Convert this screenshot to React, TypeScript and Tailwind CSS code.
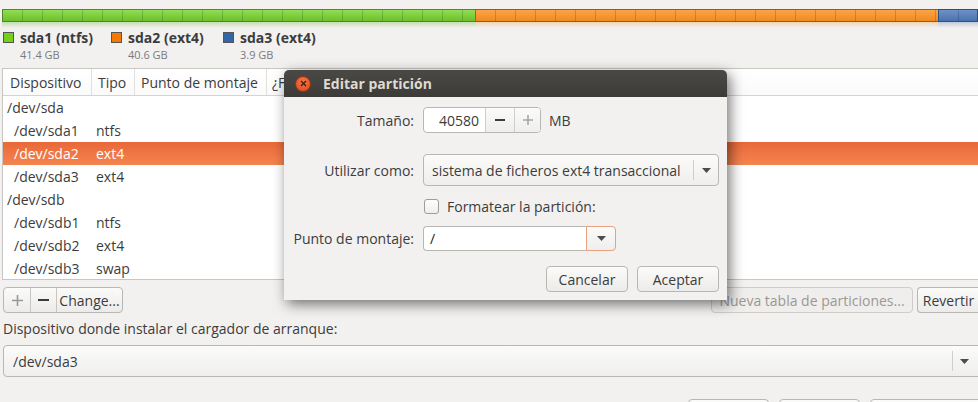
import React from "react";

const FONT = "font-['Open_Sans','Noto_Sans',sans-serif]";

type Row = { dev: string; tipo?: string; disk?: boolean; sel?: boolean };

const ROWS: Row[] = [
  { dev: "/dev/sda", disk: true },
  { dev: "/dev/sda1", tipo: "ntfs" },
  { dev: "/dev/sda2", tipo: "ext4", sel: true },
  { dev: "/dev/sda3", tipo: "ext4" },
  { dev: "/dev/sdb", disk: true },
  { dev: "/dev/sdb1", tipo: "ntfs" },
  { dev: "/dev/sdb2", tipo: "ext4" },
  { dev: "/dev/sdb3", tipo: "swap" },
];

function Arrow({ className = "" }: { className?: string }) {
  return (
    <svg width="9" height="5" viewBox="0 0 9 5" className={className}>
      <path d="M0 0h9L4.5 5z" fill="#4c4c4c" />
    </svg>
  );
}

function DiskBar() {
  return (
    <div className="pt-[9px] pl-[2px]">
      <div className="flex h-[13px]">
        <div className="w-[474px] border border-[#4d8a22] bg-[repeating-linear-gradient(90deg,transparent_0_19px,rgba(0,0,0,0.16)_19px_20px),linear-gradient(#92de52,#6cbf2c)]" />
        <div className="w-[462px] border-y border-[#9a5a14] bg-[repeating-linear-gradient(90deg,transparent_0_19px,rgba(0,0,0,0.16)_19px_20px),linear-gradient(#fca445,#ef8a21)]" />
        <div className="flex-1 border border-[#2d4f80] bg-[repeating-linear-gradient(90deg,transparent_0_19px,rgba(0,0,0,0.16)_19px_20px),linear-gradient(#6c92c8,#4a72ad)]" />
      </div>
      <div className="flex h-[6px]">
        <div className="w-[474px] bg-[linear-gradient(rgba(110,180,50,0.35),transparent)]" />
        <div className="w-[462px] bg-[linear-gradient(rgba(240,140,40,0.3),transparent)]" />
        <div className="flex-1 bg-[linear-gradient(rgba(80,110,170,0.3),transparent)]" />
      </div>
    </div>
  );
}

function LegendItem({ name, size, color, w }: { name: string; size: string; color: string; w: string }) {
  return (
    <div className={`flex shrink-0 ${w}`}>
      <div className={`mt-[4px] w-[11px] h-[11px] shrink-0 border border-[#555] ${color}`} />
      <div className="ml-[6px] flex flex-col">
        <span className="text-[14px] leading-[19px] font-bold text-[#3c3c3c] whitespace-nowrap">{name}</span>
        <span className="text-[11px] leading-[15px] text-[#7a7a7a]">{size}</span>
      </div>
    </div>
  );
}

function Legend() {
  return (
    <div className="flex pl-[3px]">
      <LegendItem name="sda1 (ntfs)" size="41.4 GB" color="bg-[#73d216]" w="w-[108px]" />
      <LegendItem name="sda2 (ext4)" size="40.6 GB" color="bg-[#f57900]" w="w-[112px]" />
      <LegendItem name="sda3 (ext4)" size="3.9 GB" color="bg-[#3465a4]" w="w-[120px]" />
    </div>
  );
}

function Table() {
  return (
    <div className="ml-[2px] h-[212px] w-[980px] bg-white border border-[#c8c6c3] overflow-hidden">
      <div className="flex h-[27px] items-center border-b border-[#d6d4d1] text-[14px] text-[#3c3c3c] bg-[linear-gradient(#ffffff,#fafafa)]">
        <div className="w-[89px] h-full flex items-center pl-[7px] border-r border-[#e2e0dd]">Dispositivo</div>
        <div className="w-[43px] h-full flex items-center pl-[6px] border-r border-[#e2e0dd]">Tipo</div>
        <div className="w-[132px] h-full flex items-center pl-[6px] border-r border-[#e2e0dd]">Punto de montaje</div>
        <div className="w-[17px] h-full flex items-center pl-[5px] overflow-hidden whitespace-nowrap">¿F</div>
      </div>
      {ROWS.map((r) => (
        <div
          key={r.dev}
          className={`flex h-[23px] items-center text-[14px] ${
            r.sel ? "text-white bg-[linear-gradient(#e8683a,#f5844f)]" : "text-[#3c3c3c]"
          }`}
        >
          <div className={`w-[89px] ${r.disk ? "pl-[4px]" : "pl-[11px]"}`}>{r.dev}</div>
          <div className="pl-[4px]">{r.tipo}</div>
        </div>
      ))}
    </div>
  );
}

function Btn({ children, className = "" }: { children?: React.ReactNode; className?: string }) {
  return (
    <div
      className={`h-[26px] shrink-0 flex items-center justify-center rounded-[4px] border border-[#b9b7b4] bg-[linear-gradient(#fbfbfa,#ecebe9)] text-[14px] text-[#3c3c3c] ${className}`}
    >
      {children}
    </div>
  );
}

function Dialog() {
  return (
    <div className="absolute left-[284px] top-[70px] w-[443px] h-[230px] rounded-t-[5px] bg-[#f2f1f0] shadow-[3px_4px_14px_rgba(0,0,0,0.55)] overflow-hidden">
      <div className="h-[27px] flex items-center bg-[linear-gradient(#4a4945,#3c3b37)]">
        <div className="ml-[11px] w-[16px] h-[16px] rounded-full bg-[radial-gradient(circle_at_50%_35%,#f5774a,#d64a1e)] border border-[#9c3514] flex items-center justify-center">
          <svg width="7" height="7" viewBox="0 0 7 7">
            <path d="M1 1l5 5M6 1l-5 5" stroke="#4a1a08" strokeWidth="1.3" />
          </svg>
        </div>
        <span className="ml-[12px] text-[14px] font-bold text-[#dfdbd2]">Editar partición</span>
      </div>

      <div className="flex flex-col pt-[10px]">
        <div className="flex items-center h-[26px]">
          <div className="w-[130px] text-right text-[14px] text-[#3c3c3c]">Tamaño:</div>
          <div className="ml-[9px] w-[118px] h-[26px] flex rounded-[4px] border border-[#b9b7b4] bg-white overflow-hidden">
            <div className="w-[61px] flex items-center justify-end pr-[6px] text-[14px] text-[#3c3c3c]">40580</div>
            <div className="w-[29px] flex items-center justify-center border-l border-[#d0cecb] bg-[linear-gradient(#fbfbfa,#efeeec)]">
              <div className="w-[10px] h-[2px] bg-[#3c3c3c]" />
            </div>
            <div className="flex-1 flex items-center justify-center border-l border-[#d0cecb] bg-[linear-gradient(#fbfbfa,#efeeec)]">
              <svg width="10" height="10" viewBox="0 0 10 10">
                <path d="M5 0v10M0 5h10" stroke="#a8a6a3" strokeWidth="1.6" />
              </svg>
            </div>
          </div>
          <div className="ml-[8px] text-[14px] text-[#3c3c3c]">MB</div>
        </div>

        <div className="flex items-center mt-[21px] h-[32px]">
          <div className="w-[130px] text-right text-[14px] text-[#3c3c3c]">Utilizar como:</div>
          <div className="ml-[9px] w-[296px] h-[32px] flex items-center rounded-[4px] border border-[#b9b7b4] bg-[linear-gradient(#fbfbfa,#efeeec)]">
            <div className="flex-1 pl-[8px] text-[14px] text-[#3c3c3c] whitespace-nowrap">sistema de ficheros ext4 transaccional</div>
            <div className="w-[25px] h-[20px] flex items-center justify-center border-l border-[#d0cecb]">
              <Arrow />
            </div>
          </div>
        </div>

        <div className="flex items-center mt-[12px] h-[16px]">
          <div className="ml-[140px] w-[15px] h-[15px] rounded-[3px] border border-[#9e9c99] bg-[linear-gradient(#fdfdfd,#efeeec)]" />
          <div className="ml-[8px] text-[14px] text-[#3c3c3c]">Formatear la partición:</div>
        </div>

        <div className="flex items-center mt-[12px] h-[25px]">
          <div className="w-[130px] text-right text-[14px] text-[#3c3c3c]">Punto de montaje:</div>
          <div className="ml-[9px] w-[193px] h-[25px] flex">
            <div className="flex-1 flex items-center pl-[6px] rounded-l-[4px] border border-r-0 border-[#b9b7b4] bg-white text-[14px] text-[#222]">/</div>
            <div className="w-[30px] flex items-center justify-center rounded-r-[4px] border border-[#e9a080] bg-[linear-gradient(#fbfbfa,#efeeec)]">
              <Arrow />
            </div>
          </div>
        </div>

        <div className="flex justify-end gap-[9px] mt-[15px] pr-[8px]">
          <Btn className="w-[82px]">Cancelar</Btn>
          <Btn className="w-[82px]">Aceptar</Btn>
        </div>
      </div>
    </div>
  );
}

export default function App() {
  return (
    <div className={`relative w-[978px] h-[402px] overflow-hidden bg-[#f2f1f0] ${FONT}`}>
      <DiskBar />
      <Legend />
      <div className="mt-[6px]">
        <Table />
      </div>

      <div className="flex items-center mt-[7px] pl-[3px]">
        <div className="flex h-[26px] rounded-[4px] border border-[#b9b7b4] bg-[linear-gradient(#fbfbfa,#ecebe9)] overflow-hidden">
          <div className="w-[26px] flex items-center justify-center">
            <svg width="11" height="11" viewBox="0 0 11 11">
              <path d="M5.5 0v11M0 5.5h11" stroke="#9a9895" strokeWidth="1.6" />
            </svg>
          </div>
          <div className="w-[26px] flex items-center justify-center border-l border-[#c8c6c3]">
            <div className="w-[11px] h-[2px] bg-[#3c3c3c]" />
          </div>
          <div className="w-[66px] flex items-center justify-center border-l border-[#c8c6c3] text-[14px] text-[#3c3c3c]">Change...</div>
        </div>
        <div className="flex-1" />
        <Btn className="w-[202px] text-[#9a9895] border-[#cfcdca] bg-none bg-[#efeeec]">Nueva tabla de particiones...</Btn>
        <Btn className="ml-[4px] mr-[-1px] w-[62px] rounded-r-none border-r-0">Revertir</Btn>
      </div>

      <div className="mt-[6px] pl-[3px] text-[14px] leading-[20px] text-[#3c3c3c]">
        Dispositivo donde instalar el cargador de arranque:
      </div>

      <div className="mt-[6px] ml-[3px] w-[980px] h-[32px] flex items-center rounded-[4px] border border-[#b9b7b4] bg-[linear-gradient(#fbfbfa,#efeeec)]">
        <div className="flex-1 pl-[9px] text-[14px] text-[#3c3c3c]">/dev/sda3</div>
        <div className="w-[27px] h-[20px] mr-[3px] flex items-center justify-start pl-[7px] border-l border-[#d0cecb]">
          <Arrow />
        </div>
      </div>

      <div className="flex mt-[22px] ml-[688px] gap-[10px]">
        <Btn className="w-[81px]" />
        <Btn className="w-[81px]" />
        <Btn className="w-[120px]" />
      </div>

      <Dialog />
    </div>
  );
}
